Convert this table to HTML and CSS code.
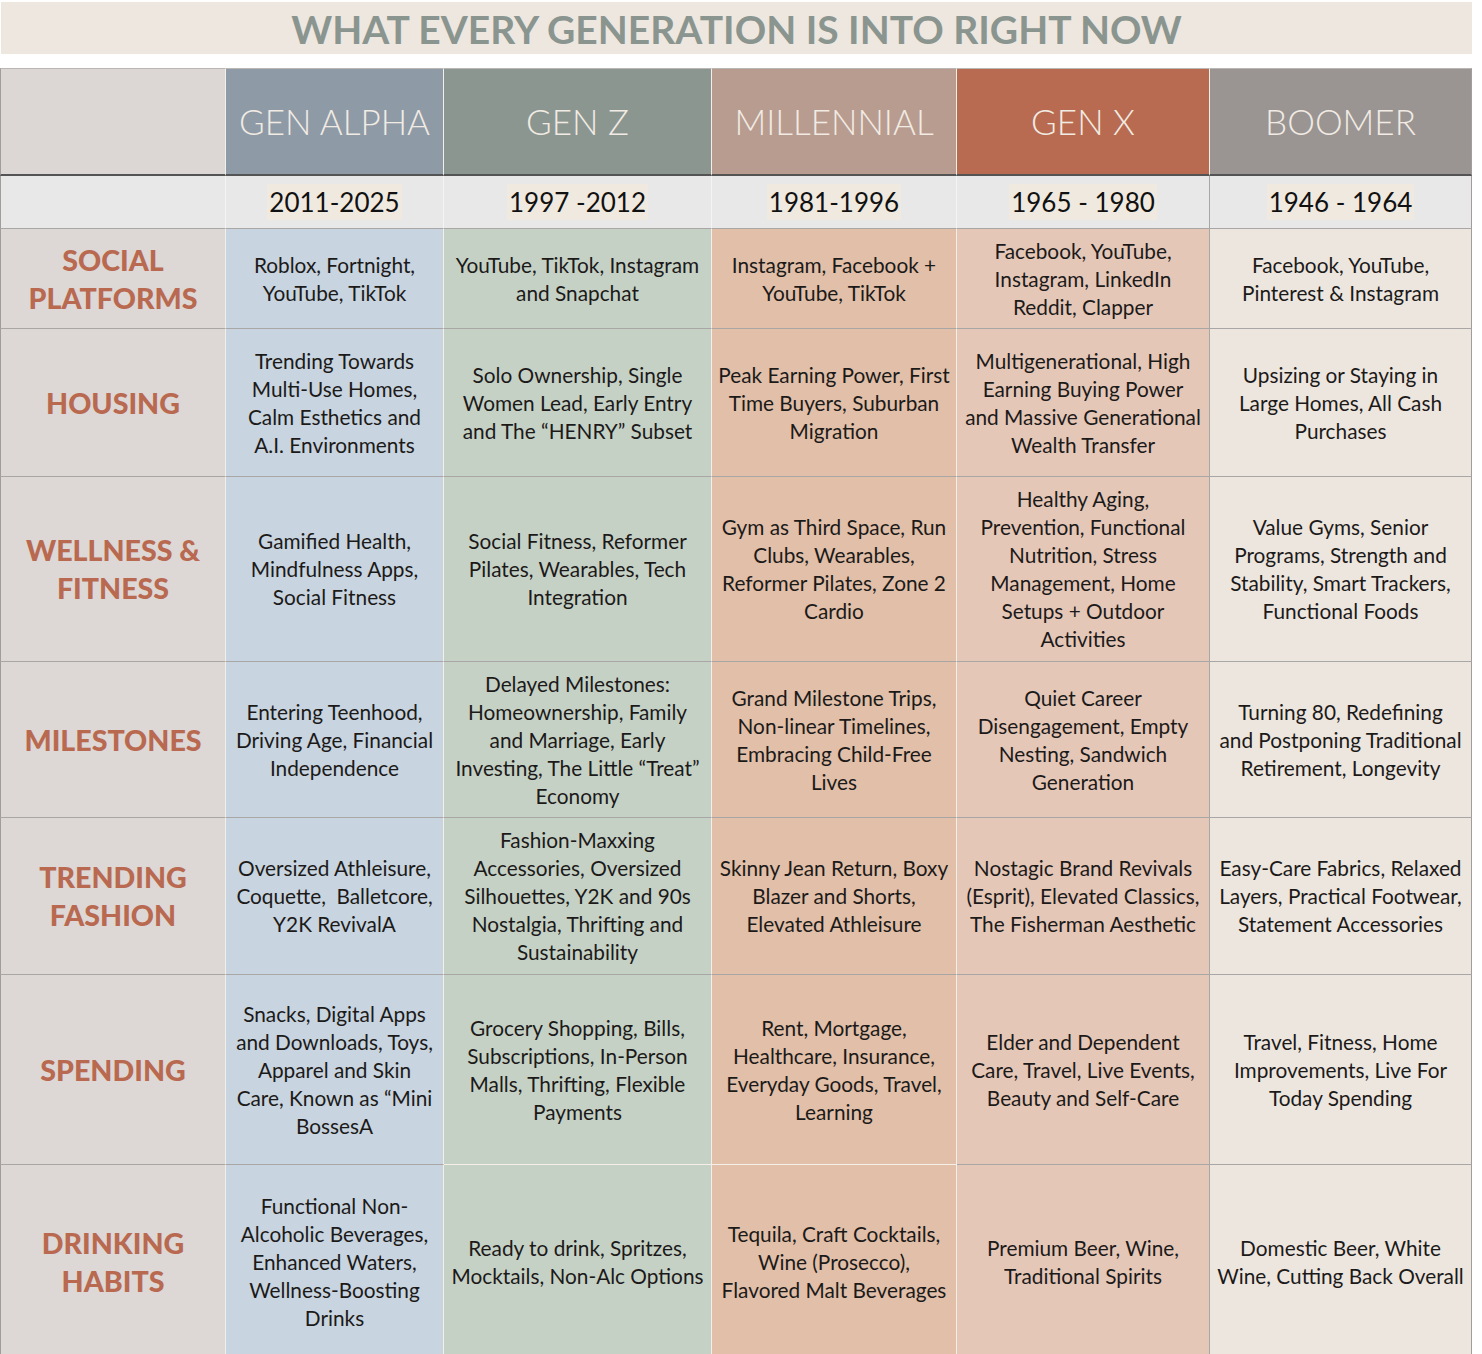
FILE: index.html
```html
<!DOCTYPE html>
<html lang="en">
<head>
<meta charset="utf-8">
<title>What Every Generation Is Into Right Now</title>
<link rel="stylesheet" href="styles.css">
</head>
<body>
<header class="banner"><h1 class="title">WHAT EVERY GENERATION IS INTO RIGHT NOW</h1></header>
<main class="table">
  <div class="cell hdr lab"></div>
  <div class="cell hdr h-alpha">GEN ALPHA</div>
  <div class="cell hdr h-z">GEN Z</div>
  <div class="cell hdr h-mill">MILLENNIAL</div>
  <div class="cell hdr h-x">GEN X</div>
  <div class="cell hdr h-boom">BOOMER</div>

  <div class="cell yr lab"></div>
  <div class="cell yr"><span class="yr-t">2011-2025</span></div>
  <div class="cell yr"><span class="yr-t">1997 -2012</span></div>
  <div class="cell yr"><span class="yr-t">1981-1996</span></div>
  <div class="cell yr yr-edge"><span class="yr-t">1965 - 1980</span></div>
  <div class="cell yr"><span class="yr-t">1946 - 1964</span></div>

  <div class="cell label">SOCIAL<br>PLATFORMS</div>
  <div class="cell txt alpha">Roblox, Fortnight,<br>YouTube, TikTok</div>
  <div class="cell txt z">YouTube, TikTok, Instagram<br>and Snapchat</div>
  <div class="cell txt mill">Instagram, Facebook +<br>YouTube, TikTok</div>
  <div class="cell txt gx">Facebook, YouTube,<br>Instagram, LinkedIn<br>Reddit, Clapper</div>
  <div class="cell txt boom">Facebook, YouTube,<br>Pinterest &amp; Instagram</div>

  <div class="cell label">HOUSING</div>
  <div class="cell txt alpha">Trending Towards<br>Multi-Use Homes,<br>Calm Esthetics and<br>A.I. Environments</div>
  <div class="cell txt z">Solo Ownership, Single<br>Women Lead, Early Entry<br>and The “HENRY” Subset</div>
  <div class="cell txt mill">Peak Earning Power, First<br>Time Buyers, Suburban<br>Migration</div>
  <div class="cell txt gx">Multigenerational, High<br>Earning Buying Power<br>and Massive Generational<br>Wealth Transfer</div>
  <div class="cell txt boom">Upsizing or Staying in<br>Large Homes, All Cash<br>Purchases</div>

  <div class="cell label">WELLNESS &amp;<br>FITNESS</div>
  <div class="cell txt alpha">Gamified Health,<br>Mindfulness Apps,<br>Social Fitness</div>
  <div class="cell txt z">Social Fitness, Reformer<br>Pilates, Wearables, Tech<br>Integration</div>
  <div class="cell txt mill">Gym as Third Space, Run<br>Clubs, Wearables,<br>Reformer Pilates, Zone 2<br>Cardio</div>
  <div class="cell txt gx">Healthy Aging,<br>Prevention, Functional<br>Nutrition, Stress<br>Management, Home<br>Setups + Outdoor<br>Activities</div>
  <div class="cell txt boom">Value Gyms, Senior<br>Programs, Strength and<br>Stability, Smart Trackers,<br>Functional Foods</div>

  <div class="cell label">MILESTONES</div>
  <div class="cell txt alpha">Entering Teenhood,<br>Driving Age, Financial<br>Independence</div>
  <div class="cell txt z">Delayed Milestones:<br>Homeownership, Family<br>and Marriage, Early<br>Investing, The Little “Treat”<br>Economy</div>
  <div class="cell txt mill">Grand Milestone Trips,<br>Non-linear Timelines,<br>Embracing Child-Free<br>Lives</div>
  <div class="cell txt gx">Quiet Career<br>Disengagement, Empty<br>Nesting, Sandwich<br>Generation</div>
  <div class="cell txt boom">Turning 80, Redefining<br>and Postponing Traditional<br>Retirement, Longevity</div>

  <div class="cell label">TRENDING<br>FASHION</div>
  <div class="cell txt alpha">Oversized Athleisure,<br>Coquette,&nbsp; Balletcore,<br>Y2K RevivalA</div>
  <div class="cell txt z">Fashion-Maxxing<br>Accessories, Oversized<br>Silhouettes, Y2K and 90s<br>Nostalgia, Thrifting and<br>Sustainability</div>
  <div class="cell txt mill">Skinny Jean Return, Boxy<br>Blazer and Shorts,<br>Elevated Athleisure</div>
  <div class="cell txt gx">Nostagic Brand Revivals<br>(Esprit), Elevated Classics,<br>The Fisherman Aesthetic</div>
  <div class="cell txt boom">Easy-Care Fabrics, Relaxed<br>Layers, Practical Footwear,<br>Statement Accessories</div>

  <div class="cell label">SPENDING</div>
  <div class="cell txt alpha">Snacks, Digital Apps<br>and Downloads, Toys,<br>Apparel and Skin<br>Care, Known as “Mini<br>BossesA</div>
  <div class="cell txt z white-b">Grocery Shopping, Bills,<br>Subscriptions, In-Person<br>Malls, Thrifting, Flexible<br>Payments</div>
  <div class="cell txt mill white-b">Rent, Mortgage,<br>Healthcare, Insurance,<br>Everyday Goods, Travel,<br>Learning</div>
  <div class="cell txt gx">Elder and Dependent<br>Care, Travel, Live Events,<br>Beauty and Self-Care</div>
  <div class="cell txt boom">Travel, Fitness, Home<br>Improvements, Live For<br>Today Spending</div>

  <div class="cell label">DRINKING<br>HABITS</div>
  <div class="cell txt alpha">Functional Non-<br>Alcoholic Beverages,<br>Enhanced Waters,<br>Wellness-Boosting<br>Drinks</div>
  <div class="cell txt z">Ready to drink, Spritzes,<br>Mocktails, Non-Alc Options</div>
  <div class="cell txt mill">Tequila, Craft Cocktails,<br>Wine (Prosecco),<br>Flavored Malt Beverages</div>
  <div class="cell txt gx">Premium Beer, Wine,<br>Traditional Spirits</div>
  <div class="cell txt boom">Domestic Beer, White<br>Wine, Cutting Back Overall</div>
</main>
</body>
</html>
```
FILE: styles.css
```css
* { box-sizing: border-box; }
html, body { margin: 0; padding: 0; background: #ffffff; }
body { font-family: "Lato", "Liberation Sans", sans-serif; color: #1c1a19; }

.banner {
  width: 1471px;
  height: 52px;
  margin: 2px 0 14px 1px;
  background: #eee7df;
  display: flex;
  align-items: center;
  justify-content: center;
}
.title {
  margin: 0;
  font-family: "Lato", sans-serif;
  font-weight: 700;
  font-size: 39px;
  letter-spacing: 0;
  color: #8b9590;
  line-height: 1;
  padding-top: 2px;
}

.table {
  display: grid;
  width: 1472px;
  grid-template-columns: 226px 218px 268px 245px 253px 262px;
  grid-template-rows: 108px 53px 100px 148px 185px 156px 157px 190px 194px;
}
.cell {
  display: flex;
  align-items: center;
  justify-content: center;
  text-align: center;
  white-space: nowrap;
  border-right: 1px solid #f2eee8;
  border-bottom: 1px solid #a9a7a6;
}
.cell:nth-child(6n+1) { border-left: 1px solid #a09e9d; }
.cell:nth-child(6n) { border-right: 1px solid #a09e9d; }

.hdr {
  border-top: 1px solid #b9b6b4;
  border-bottom: 2px solid #545454;
  font-weight: 300;
  font-size: 35px;
  color: #f1ebe3;
  padding-bottom: 2px;
}
.hdr.lab { background: #dcd6d5; }
.h-alpha { background: #8e9aa6; }
.h-z { background: #8c9691; }
.h-mill { background: #b89c90; }
.h-x { background: #b86b51; }
.h-boom { background: #9a9593; }

.yr {
  background: #e8e8e8;
  font-size: 26px;
  color: #111;
  border-right-color: #f4f4f4;
}
.yr-edge { border-right-color: #a9a7a6; }
.yr-t {
  background: #efe9e0;
  padding: 1px 2px;
  line-height: 34px;
}

.label {
  background: #ddd7d6;
  color: #b8694f;
  font-weight: 900;
  font-size: 28.6px;
  line-height: 38px;
}
.txt {
  font-size: 20.8px;
  line-height: 28px;
}
.alpha { background: #c8d4df; }
.z { background: #c6d1c6; }
.mill { background: #e1bfa8; }
.gx { background: #e5c7b8; border-right-color: #a9a7a6; }
.boom { background: #ede6df; }
.white-b { border-bottom-color: #f4efe9; }
```
